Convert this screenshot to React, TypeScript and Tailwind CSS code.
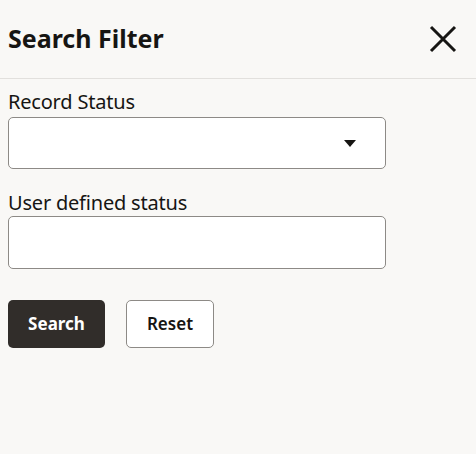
export default function App() {
  return (
    <div
      className="w-[476px] h-[454px] bg-[#f9f8f6] text-[#161513]"
      style={{ fontFamily: '"Noto Sans", "Open Sans", sans-serif' }}
    >
      <div className="h-[79px] flex items-center justify-between pl-2 pr-[18px] border-b border-[#e2e0dd]">
        <h1 className="text-[25px] font-bold leading-none mt-[-2px]">Search Filter</h1>
        <button className="w-[30px] h-[30px] flex items-center justify-center" aria-label="Close">
          <svg width="28" height="28" viewBox="0 0 28 28">
            <path d="M2 2 L26 26 M26 2 L2 26" stroke="#161513" strokeWidth="3" fill="none" />
          </svg>
        </button>
      </div>

      <div className="px-2 pt-[11px]">
        <label className="block text-[20px] leading-[24px] tracking-[-0.2px]">Record Status</label>
        <div className="mt-[3px] w-[378px] h-[52px] bg-white border border-[#8d8a86] rounded-[5px] flex items-center justify-end pr-[29px]">
          <svg width="12" height="7" viewBox="0 0 12 7">
            <path d="M0 0 L12 0 L6 7 Z" fill="#161513" />
          </svg>
        </div>

        <label className="block mt-[22px] text-[20px] leading-[24px] tracking-[-0.2px]">User defined status</label>
        <input
          className="block mt-[1px] w-[378px] h-[53px] bg-white border border-[#8d8a86] rounded-[5px] outline-none px-3"
        />

        <div className="flex gap-[21px] mt-[31px]">
          <button className="w-[97px] h-[48px] bg-[#312d2a] text-white text-[17px] font-bold rounded-[5px]">
            Search
          </button>
          <button className="w-[88px] h-[48px] bg-white border border-[#8d8a86] text-[#161513] text-[17px] font-semibold rounded-[5px]">
            Reset
          </button>
        </div>
      </div>
    </div>
  );
}
